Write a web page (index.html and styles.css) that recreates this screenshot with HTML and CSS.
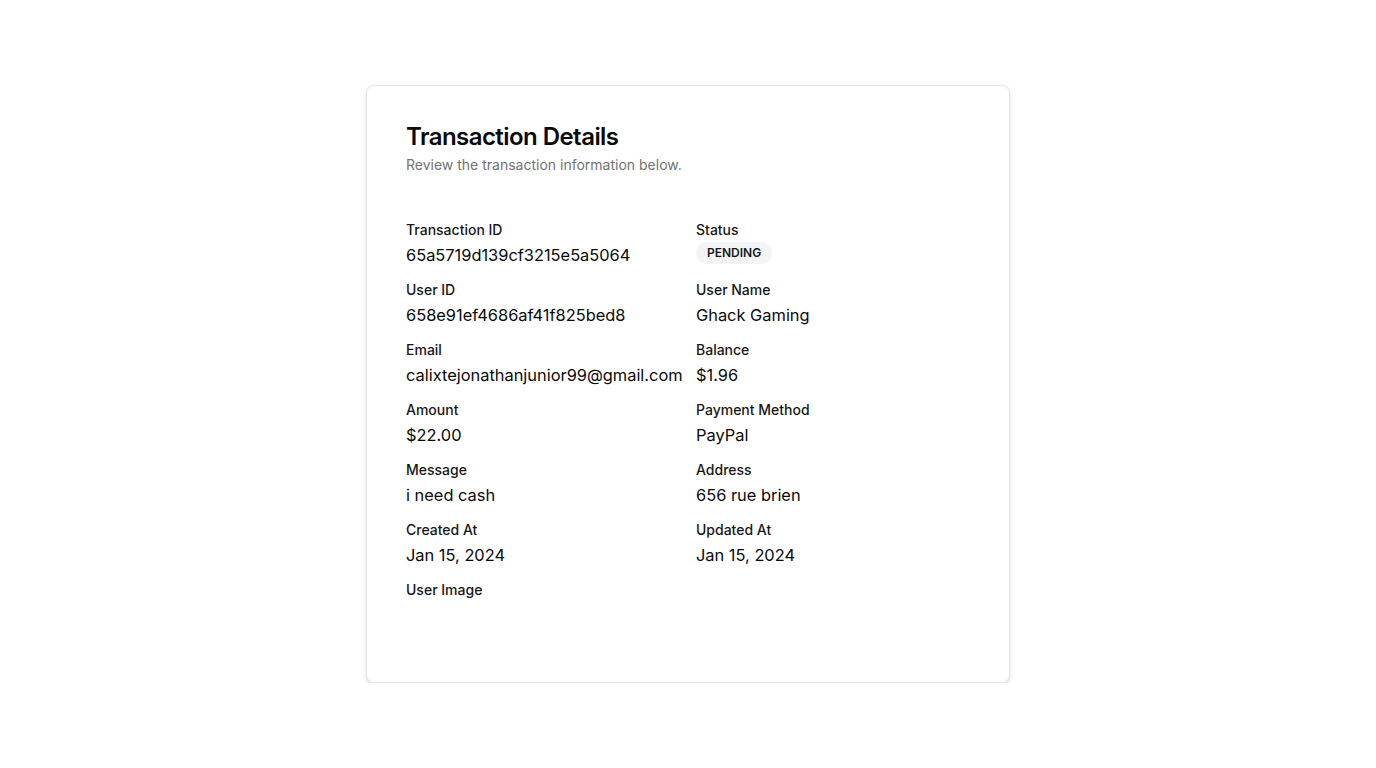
FILE: index.html
```html
<!DOCTYPE html>
<html lang="en">
<head>
<meta charset="utf-8">
<title>Transaction Details</title>
<link rel="stylesheet" href="styles.css">
</head>
<body>
<main class="page">
  <section class="card">
    <header class="card-header">
      <h1 class="title">Transaction Details</h1>
      <p class="subtitle">Review the transaction information below.</p>
    </header>
    <div class="grid">
      <div class="field"><div class="label">Transaction ID</div><div class="value">65a5719d139cf3215e5a5064</div></div>
      <div class="field"><div class="label">Status</div><div class="value value-badge"><span class="badge">PENDING</span></div></div>
      <div class="field"><div class="label">User ID</div><div class="value">658e91ef4686af41f825bed8</div></div>
      <div class="field"><div class="label">User Name</div><div class="value">Ghack Gaming</div></div>
      <div class="field"><div class="label">Email</div><div class="value">calixtejonathanjunior99@gmail.com</div></div>
      <div class="field"><div class="label">Balance</div><div class="value">$1.96</div></div>
      <div class="field"><div class="label">Amount</div><div class="value">$22.00</div></div>
      <div class="field"><div class="label">Payment Method</div><div class="value">PayPal</div></div>
      <div class="field"><div class="label">Message</div><div class="value">i need cash</div></div>
      <div class="field"><div class="label">Address</div><div class="value">656 rue brien</div></div>
      <div class="field"><div class="label">Created At</div><div class="value">Jan 15, 2024</div></div>
      <div class="field"><div class="label">Updated At</div><div class="value">Jan 15, 2024</div></div>
      <div class="field"><div class="label">User Image</div><div class="image-slot"></div></div>
    </div>
  </section>
</main>
</body>
</html>
```
FILE: styles.css
```css
* { box-sizing: border-box; }
html, body { margin: 0; padding: 0; background: #ffffff; }
body {
  font-family: Inter, "Noto Sans", "Liberation Sans", sans-serif;
  color: #0a0a0a;
}
.page {
  display: flex;
  justify-content: center;
  padding-top: 85px;
}
.card {
  width: 644px;
  border: 1px solid #e5e7eb;
  border-radius: 8px;
  background: #fff;
  box-shadow: 0 2px 4px rgba(0,0,0,0.10), 0 1px 2px rgba(0,0,0,0.06);
  padding: 39px;
}
.card-header {
  display: flex;
  flex-direction: column;
  gap: 6px;
  margin-bottom: 44px;
}
.title {
  margin: 0;
  font-size: 24px;
  line-height: 24px;
  font-weight: 600;
  letter-spacing: -0.55px;
  color: #0a0a0a;
}
.subtitle {
  margin: 0;
  font-size: 14px;
  line-height: 20px;
  color: #737373;
}
.grid {
  display: grid;
  grid-template-columns: 274px 274px;
  column-gap: 16px;
  row-gap: 12px;
}
.field {
  display: flex;
  flex-direction: column;
  gap: 4px;
}
.label {
  font-size: 14px;
  line-height: 20px;
  font-weight: 500;
  color: #171717;
  padding-top: 1px;
  margin-bottom: -1px;
}
.value {
  font-size: 16.4px;
  line-height: 24px;
  font-weight: 400;
  color: #0a0a0a;
  white-space: nowrap;
}
.value-badge {
  display: flex;
  align-items: flex-start;
}
.badge {
  display: inline-block;
  font-size: 12px;
  line-height: 22px;
  font-weight: 600;
  padding: 0 11px;
  margin-top: -1px;
  border-radius: 999px;
  background: #f3f4f6;
  color: #171717;
}
.image-slot {
  height: 40px;
}
```
